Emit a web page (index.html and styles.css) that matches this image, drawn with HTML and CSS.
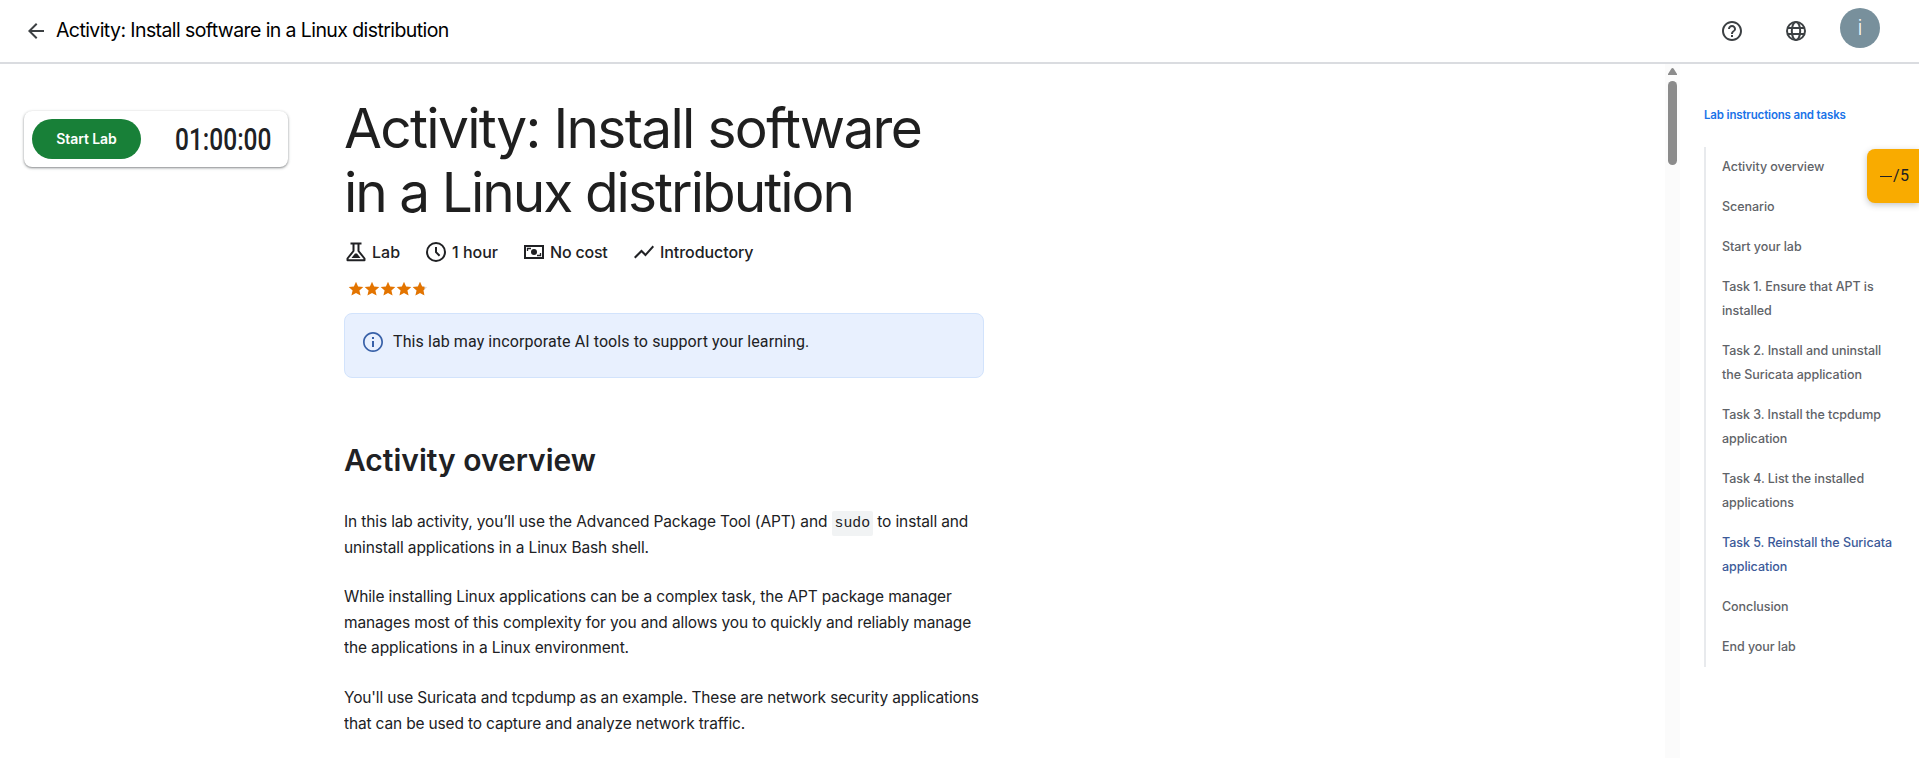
FILE: index.html
```html
<!DOCTYPE html>
<html lang="en">
<head>
<meta charset="utf-8">
<title>Activity: Install software in a Linux distribution</title>
<link rel="stylesheet" href="styles.css">
</head>
<body>
<header class="topbar">
  <svg class="icon back" viewBox="0 0 24 24"><path d="M20 11H7.83l5.59-5.59L12 4l-8 8 8 8 1.41-1.41L7.83 13H20z"/></svg>
  <span class="topbar-title">Activity: Install software in a Linux distribution</span>
  <div class="actions">
    <svg class="icon" viewBox="0 0 24 24"><path d="M11 18h2v-2h-2v2zm1-16C6.48 2 2 6.48 2 12s4.48 10 10 10 10-4.480 10-10S17.520 2 12 2zm0 18c-4.410 0-8-3.590-8-8s3.590-8 8-8 8 3.590 8 8-3.590 8-8 8zm0-14c-2.210 0-4 1.790-4 4h2c0-1.100.9-2 2-2s2 .9 2 2c0 2-3 1.750-3 5h2c0-2.250 3-2.500 3-5 0-2.210-1.790-4-4-4z"/></svg>
    <svg class="icon" viewBox="0 0 24 24" fill="none" stroke="currentColor" stroke-width="2"><circle cx="12" cy="12" r="9"/><ellipse cx="12" cy="12" rx="4.200" ry="9"/><path d="M3.800 9h16.400M3.800 15h16.400"/></svg>
    <span class="avatar">i</span>
  </div>
</header>
<div class="body">
  <aside class="left">
    <div class="control">
      <button class="start">Start Lab</button>
      <div class="timer"><span class="timer-text">01:00:00</span></div>
    </div>
  </aside>
  <main class="main">
    <article class="content">
      <h1 class="title"><span class="l1">Activity: Install software</span><br><span class="l2">in a Linux distribution</span></h1>
      <div class="tags">
        <span class="tag tag-lab"><svg viewBox="0 0 24 24"><path fill="none" stroke="currentColor" stroke-width="2" stroke-linejoin="round" d="M6.500 3.500h11M9.500 4v7L3.500 18.500v1.700h17v-1.700L14.500 11V4"/><path d="M11 13.500h2l3.500 4.500h-9z"/></svg>Lab</span>
        <span class="tag tag-time"><svg viewBox="0 0 24 24" fill="none" stroke="currentColor" stroke-width="2"><circle cx="12" cy="12" r="9"/><path d="M12 7v5.200l3.600 3.600"/></svg>1 hour</span>
        <span class="tag tag-cost"><svg viewBox="0 0 24 24" fill="none" stroke="currentColor"><path stroke-width="2" d="M3 6h18v12H3z"/><path stroke-width="1.300" d="M5.500 11V8.500H9M18.500 13v2.500H15"/><circle cx="12" cy="12" r="3" fill="currentColor" stroke="none"/></svg>No cost</span>
        <span class="tag tag-level"><svg viewBox="0 0 24 24"><path d="M3.500 18.490l6-6.010 4 4L22 6.920l-1.410-1.410-7.090 7.970-4-4L2 16.990z"/></svg>Introductory</span>
      </div>
      <svg class="stars" viewBox="0 0 80 16">
        <defs>
          <path id="star" d="M8 .8l2.100 4.700 5.200.5-3.900 3.400 1.200 5.200L8 11.900l-4.600 2.700 1.200-5.200L.7 6l5.200-.5z"/>
          <clipPath id="filled"><path d="M0 0h76.500v16H0z"/></clipPath>
        </defs>
        <use href="#star" x="64" fill="#dadce0"/>
        <g fill="#e37400" clip-path="url(#filled)"><use href="#star"/><use href="#star" x="16"/><use href="#star" x="32"/><use href="#star" x="48"/><use href="#star" x="64"/></g>
      </svg>
      <div class="notice">
        <svg class="notice-icon" viewBox="0 0 24 24"><path d="M11 7h2v2h-2zm0 4h2v6h-2zm1-9C6.480 2 2 6.480 2 12s4.480 10 10 10 10-4.480 10-10S17.520 2 12 2zm0 18.300c-4.580 0-8.300-3.720-8.300-8.300S7.420 3.700 12 3.700s8.300 3.720 8.300 8.300-3.720 8.300-8.300 8.300z"/></svg>
        <span>This lab may incorporate AI tools to support your learning.</span>
      </div>
      <h2 class="heading">Activity overview</h2>
      <p class="para">In this lab activity, you’ll use the Advanced Package Tool (APT) and <code class="code">sudo</code> to install and<br>uninstall applications in a Linux Bash shell.</p>
      <p class="para">While installing Linux applications can be a complex task, the APT package manager<br>manages most of this complexity for you and allows you to quickly and reliably manage<br>the applications in a Linux environment.</p>
      <p class="para last">You'll use Suricata and tcpdump as an example. These are network security applications<br>that can be used to capture and analyze network traffic.</p>
    </article>
  </main>
  <div class="scrollbar"><svg class="scroll-up" viewBox="0 0 9 7"><path d="M4.500 0Q5.200 0 5.700.8L9 6v1H0V6L3.300.8Q3.800 0 4.500 0z"/></svg><div class="thumb"></div></div>
  <nav class="outline">
    <div class="outline-title">Lab instructions and tasks</div>
    <ul class="outline-list">
      <li>Activity overview</li>
      <li>Scenario</li>
      <li>Start your lab</li>
      <li>Task 1. Ensure that APT is<br>installed</li>
      <li>Task 2. Install and uninstall<br>the Suricata application</li>
      <li>Task 3. Install the tcpdump<br>application</li>
      <li>Task 4. List the installed<br>applications</li>
      <li class="active">Task 5. Reinstall the Suricata<br>application</li>
      <li>Conclusion</li>
      <li>End your lab</li>
    </ul>
  </nav>
</div>
<div class="score"><span class="dash"></span>/5</div>
</body>
</html>
```
FILE: styles.css
```css
* { box-sizing: border-box; }
body {
  margin: 0;
  height: 758px;
  overflow: hidden;
  display: flex;
  flex-direction: column;
  background: #fff;
  color: #202124;
  font-family: Inter, "Liberation Sans", sans-serif;
}
.topbar {
  flex: none;
  height: 64px;
  border-bottom: 2px solid #dadce0;
  display: flex;
  align-items: center;
  padding: 0 39px 0 24px;
}
.icon { width: 24px; height: 24px; fill: #3c4043; color: #3c4043; }
.icon[fill="none"] { fill: none; }
.topbar-title {
  margin: 0 0 2px 8px;
  font-size: 19.5px;
  line-height: 24px;
  letter-spacing: -0.59px;
  color: #000;
}
.actions { margin-left: auto; display: flex; align-items: center; gap: 40px; }
.avatar {
  width: 40px;
  height: 40px;
  margin: 0 0 6px -8px;
  border-radius: 50%;
  background: #78909c;
  color: #fff;
  font: 300 22px/40px Roboto, sans-serif;
  text-align: center;
}
.body { flex: 1; min-height: 0; display: flex; }
.left { flex: none; width: 344px; padding: 47px 56px 0 24px; }
.control {
  height: 56px;
  padding: 8px;
  border-radius: 8px;
  display: flex;
  align-items: center;
  box-shadow: 0 1px 2px rgba(60, 64, 67, .5), 0 1px 3px 1px rgba(60, 64, 67, .12);
}
.start {
  width: 109px;
  height: 40px;
  padding: 0;
  border: 0;
  border-radius: 20px;
  background: #188038;
  color: #fff;
  font: 600 14px/20px Inter, sans-serif;
  letter-spacing: -0.08px;
}
.timer { margin-left: 34px; padding-top: 1px; width: 98px; }
.timer-text {
  display: inline-block;
  font: 500 31px/40px Roboto, sans-serif;
  transform: scaleX(.79);
  transform-origin: 0 50%;
}
.main { flex: 1; min-width: 0; overflow: hidden; }
.content { width: 640px; padding-top: 32px; }
.title { margin: 0; font-size: 55px; line-height: 64px; font-weight: 400; color: #1f1f1f; white-space: nowrap; }
.l1 { letter-spacing: -1.68px; }
.l2 { letter-spacing: -1.97px; }
.tags { display: flex; height: 48px; padding-top: 7px; align-items: center; font-size: 16px; font-weight: 500; }
.tag { display: flex; align-items: center; gap: 4px; white-space: nowrap; }
.tag svg { width: 24px; height: 24px; fill: currentColor; }
.tag svg[fill="none"] { fill: none; }
.tag-lab { width: 80px; }
.tag-time { width: 98px; }
.tag-cost { width: 110px; }
.tag-cost { letter-spacing: -0.2px; }
.tag-level { letter-spacing: -0.07px; }
.stars { display: block; width: 80px; height: 16px; margin: 9px 0 16px 4px; }
.notice {
  height: 65px;
  padding: 16px;
  border: 1px solid #d2e3fc;
  border-radius: 8px;
  background: #e8f0fe;
  display: flex;
  gap: 8px;
  font: 16px/24px Roboto, sans-serif;
  letter-spacing: .09px;
}
.notice-icon { width: 24px; height: 24px; fill: #3760a8; }
.heading { margin: 62px 0 29px; font-size: 30px; line-height: 40px; font-weight: 600; }
.para { margin: 0 0 24px; font-size: 15.5px; line-height: 25.6px; letter-spacing: -0.13px; white-space: nowrap; }
.para.last { letter-spacing: -0.16px; }
.code {
  padding: 4px 3px 5px;
  border-radius: 2px;
  background: #f1f3f4;
  font: 14.8px/1 "Liberation Mono", monospace;
  letter-spacing: 0;
}
.scrollbar {
  flex: none;
  width: 15px;
  margin-right: 24px;
  padding-top: 4px;
  background: #fbfbfb;
  display: flex;
  flex-direction: column;
  align-items: center;
}
.scroll-up { width: 9px; height: 7px; fill: #8b8b8b; }
.thumb { width: 9px; height: 84px; margin-top: 6px; border-radius: 5px; background: #8b8b8b; }
.outline { flex: none; width: 215px; padding-top: 39px; }
.outline-title { font-size: 11.5px; line-height: 24px; font-weight: 600; letter-spacing: -0.16px; color: #1a73e8; }
.outline-list {
  margin: 20px 0 0;
  padding: 0 0 0 16px;
  list-style: none;
  border-left: 2px solid #e8eaed;
  color: #5f6368;
  font-size: 12.5px;
  line-height: 24px;
  font-weight: 500;
  letter-spacing: -0.05px;
}
.outline-list li { padding: 8px 0; white-space: nowrap; }
.outline-list .active { color: #3c5a99; }
.score {
  position: absolute;
  right: 0;
  top: 149px;
  width: 52px;
  height: 54px;
  border-radius: 8px 0 0 8px;
  background: #f9ab00;
  box-shadow: 0 2px 6px rgba(60, 64, 67, .3);
  padding-left: 13px;
  display: flex;
  align-items: center;
  gap: 1px;
  font: 16px/54px Roboto, sans-serif;
  letter-spacing: .3px;
}
.dash { width: 12px; height: 1px; background: #202124; }
```
